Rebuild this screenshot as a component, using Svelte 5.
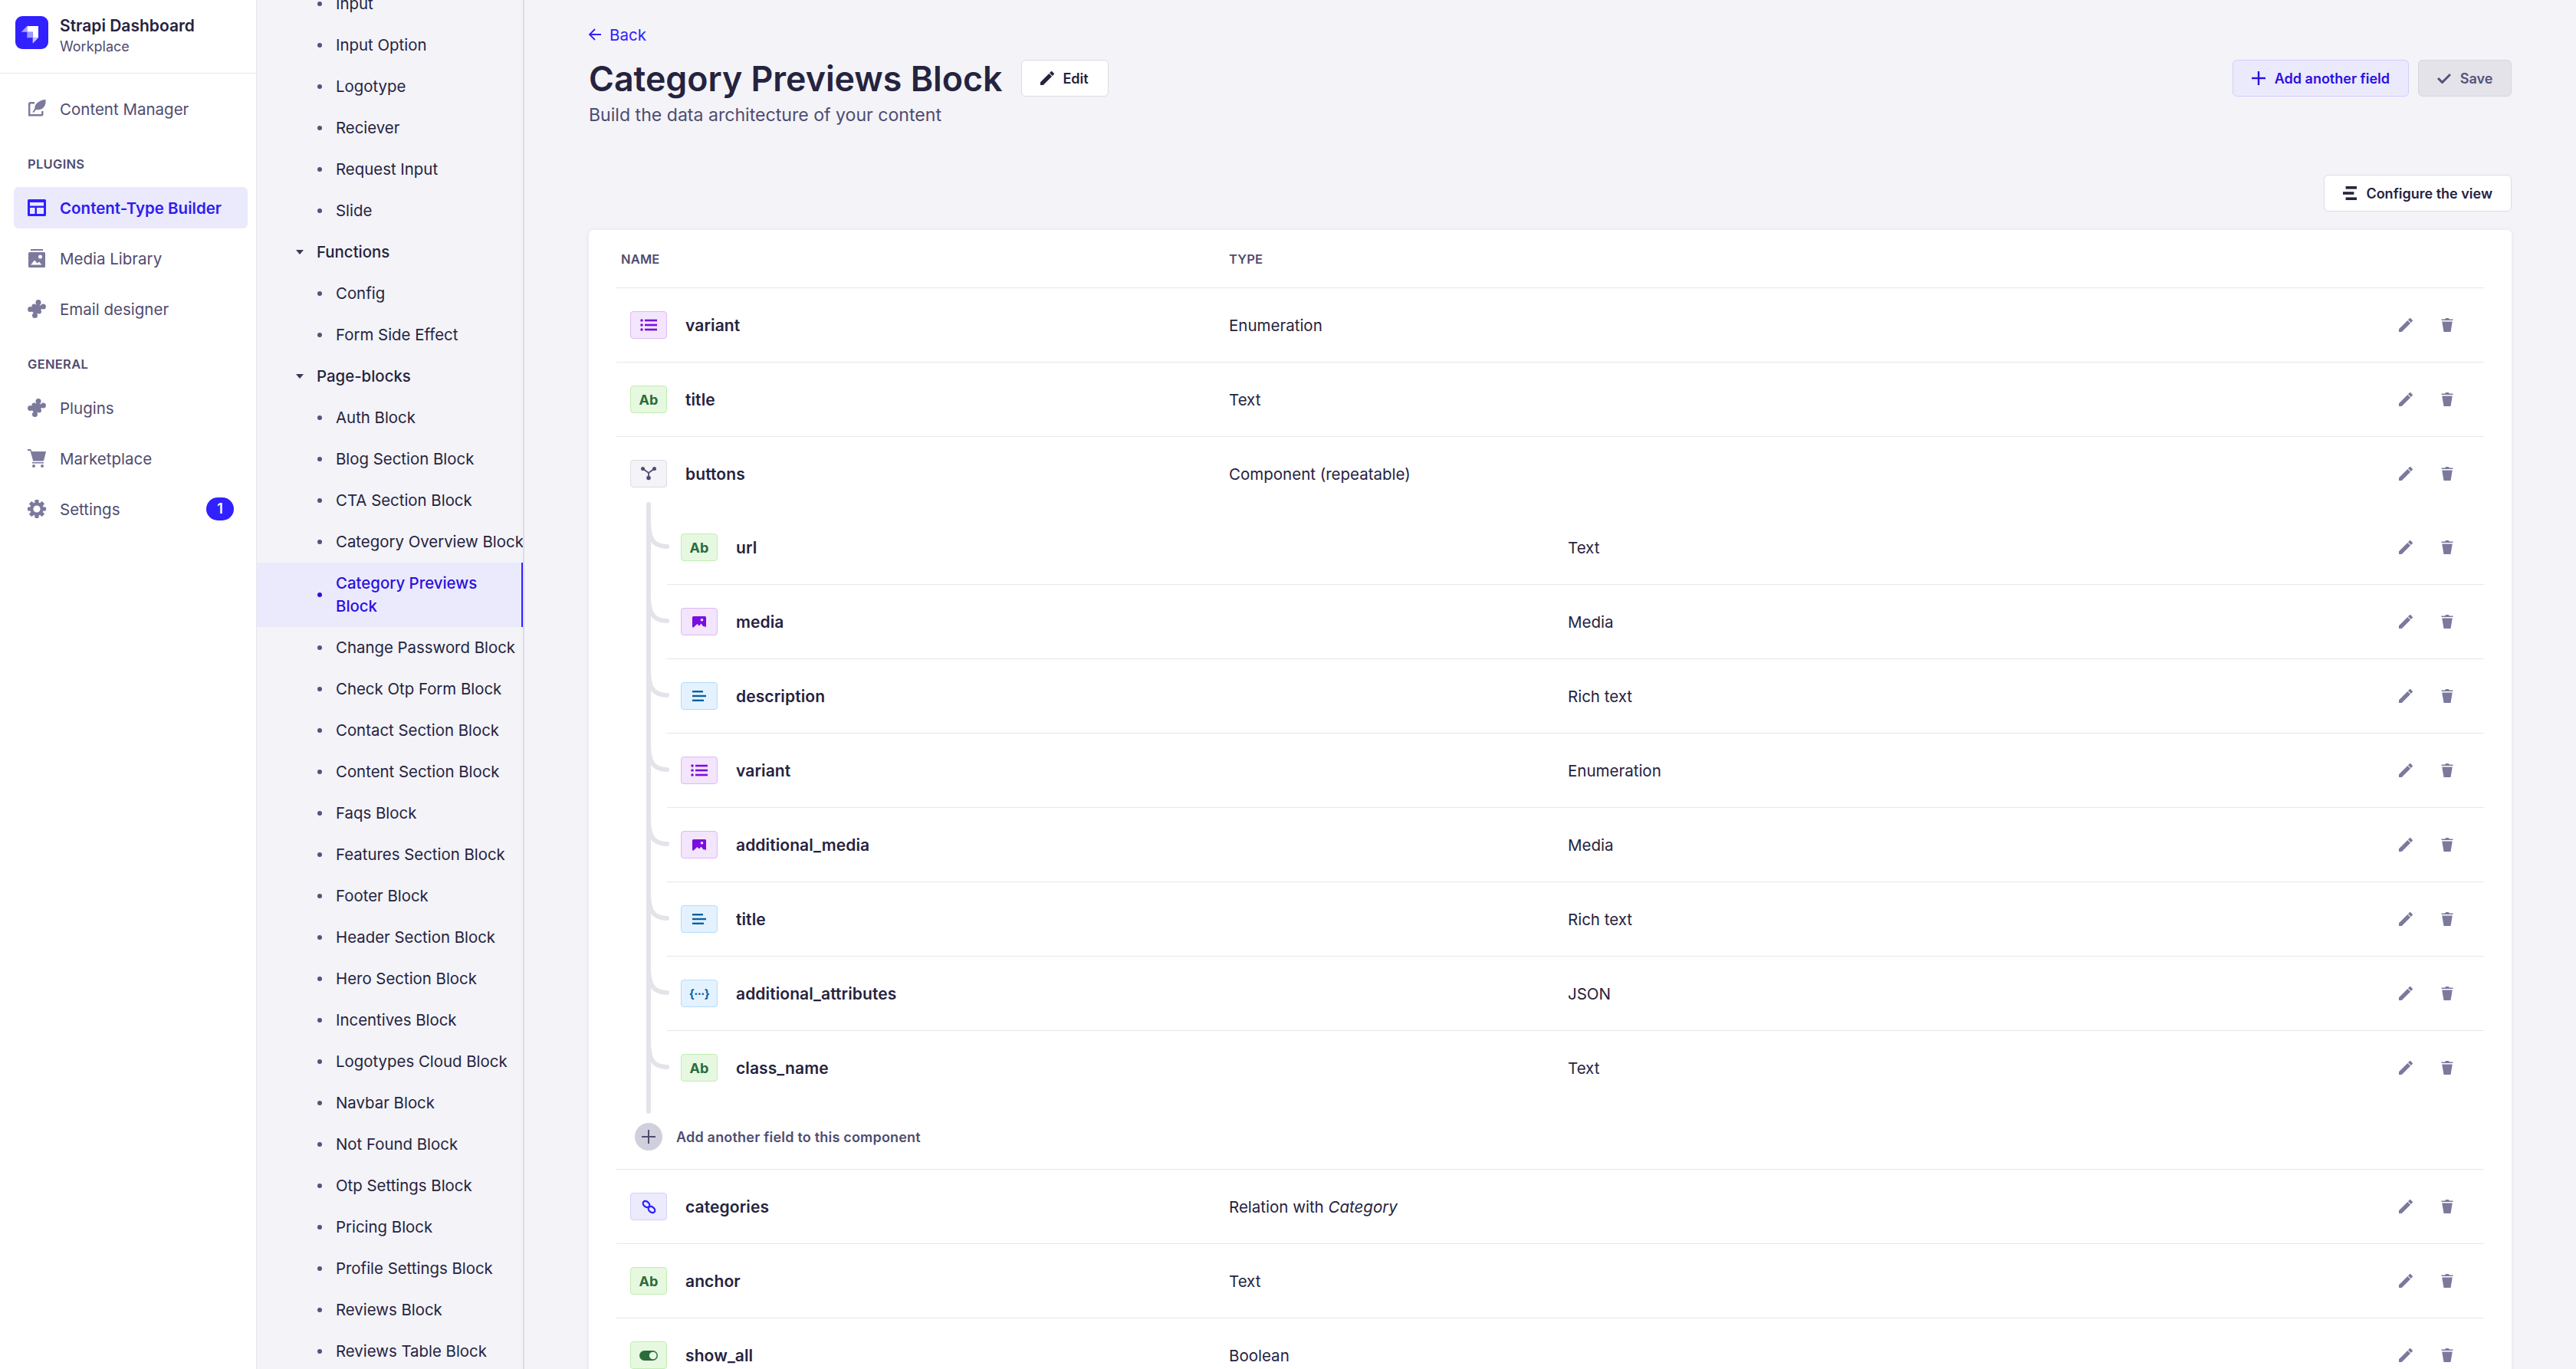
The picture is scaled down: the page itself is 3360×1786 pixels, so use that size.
<script>
  const plugins = [
    { label: 'Content-Type Builder', icon: 'layout', active: true },
    { label: 'Media Library', icon: 'media' },
    { label: 'Email designer', icon: 'puzzle' }
  ];
  const general = [
    { label: 'Plugins', icon: 'puzzle' },
    { label: 'Marketplace', icon: 'cart' },
    { label: 'Settings', icon: 'gear', badge: 1 }
  ];

  const tree = [
    { label: 'Input' }, { label: 'Input Option' }, { label: 'Logotype' }, { label: 'Reciever' },
    { label: 'Request Input' }, { label: 'Slide' },
    { label: 'Functions', group: true },
    { label: 'Config' }, { label: 'Form Side Effect' },
    { label: 'Page-blocks', group: true },
    { label: 'Auth Block' }, { label: 'Blog Section Block' }, { label: 'CTA Section Block' },
    { label: 'Category Overview Block' },
    { label: 'Category Previews Block', active: true },
    { label: 'Change Password Block' }, { label: 'Check Otp Form Block' }, { label: 'Contact Section Block' },
    { label: 'Content Section Block' }, { label: 'Faqs Block' }, { label: 'Features Section Block' },
    { label: 'Footer Block' }, { label: 'Header Section Block' }, { label: 'Hero Section Block' },
    { label: 'Incentives Block' }, { label: 'Logotypes Cloud Block' }, { label: 'Navbar Block' },
    { label: 'Not Found Block' }, { label: 'Otp Settings Block' }, { label: 'Pricing Block' },
    { label: 'Profile Settings Block' }, { label: 'Reviews Block' }, { label: 'Reviews Table Block' }
  ];

  const nested = [
    { name: 'url', kind: 'text', type: 'Text' },
    { name: 'media', kind: 'media', type: 'Media' },
    { name: 'description', kind: 'rich', type: 'Rich text' },
    { name: 'variant', kind: 'enum', type: 'Enumeration' },
    { name: 'additional_media', kind: 'media', type: 'Media' },
    { name: 'title', kind: 'rich', type: 'Rich text' },
    { name: 'additional_attributes', kind: 'json', type: 'JSON' },
    { name: 'class_name', kind: 'text', type: 'Text' }
  ];
  const after = [
    { name: 'anchor', kind: 'text', type: 'Text' },
    { name: 'show_all', kind: 'bool', type: 'Boolean' }
  ];
  const gearTeeth = [0, 45, 90, 135, 180, 225, 270, 315];
</script>

{#snippet navIcon(name)}
  <svg class="nav-icon" viewBox="0 0 24 24" fill="currentColor" aria-hidden="true">
    {#if name === 'feather'}
      <path d="M9 3H3.500A2.500 2.500 0 0 0 1 5.500v16h17a2.500 2.500 0 0 0 2.500-2.500v-4h-2.400v4H3.400V5.400H9z" />
      <path d="M23.500 0c.600 5-1 10.500-6 12.500-2.500 1-5 .800-6.500.500L8 17l-1.600-.800 3-4.700C8.500 6 15 .500 23.500 0z" />
    {:else if name === 'layout'}
      <path d="M0 2.500A1.500 1.500 0 0 1 1.500 1h21A1.500 1.500 0 0 1 24 2.500v19a1.500 1.500 0 0 1-1.500 1.500h-21A1.500 1.500 0 0 1 0 21.500zM3 5v4.500h18V5zm0 7v8h6.500v-8zm9 0v8h9v-8z" fill-rule="evenodd" />
    {:else if name === 'media'}
      <rect x="4" y="0" width="16" height="2" />
      <path d="M2.500 4h19A1.500 1.500 0 0 1 23 5.500v17a1.500 1.500 0 0 1-1.500 1.500h-19A1.500 1.500 0 0 1 1 22.500v-17A1.500 1.500 0 0 1 2.500 4zm14 3.500a2.500 2.500 0 1 0 0 5 2.500 2.500 0 0 0 0-5zM4 20.500l5-6 3.500 4 2.500-2 3.500 4z" fill-rule="evenodd" />
    {:else if name === 'puzzle'}
      <path d="M13.500 5 20 10 15 15.500 10 20 4 13 8 8.500z" />
      <circle cx="14" cy="3.600" r="3.500" />
      <circle cx="20.400" cy="9" r="3.500" />
      <circle cx="3.600" cy="12.500" r="3.500" />
      <circle cx="9.500" cy="20.400" r="3.500" />
      <circle cx="15" cy="15.500" r="3" />
      <circle cx="8.500" cy="8.500" r="3" />
    {:else if name === 'cart'}
      <path d="M0 0h3.200c.700 0 1.300.400 1.500 1.100L5.300 3H24l-2.700 11.300c-.200.700-.800 1.200-1.500 1.200H7.300L3.400 2H0z" />
      <rect x="6" y="17" width="15" height="1.500" />
      <circle cx="8" cy="22" r="2" />
      <circle cx="19" cy="22" r="2" />
    {:else if name === 'gear'}
      <g transform="translate(12 12)">
        {#each gearTeeth as a}
          <rect x="-2.600" y="-12" width="5.200" height="6" rx="1" transform="rotate({a})" />
        {/each}
      </g>
      <circle cx="12" cy="12" r="6.700" fill="none" stroke="currentColor" stroke-width="4.200" />
    {/if}
  </svg>
{/snippet}

{#snippet fieldIcon(kind)}
  <span class="badge {kind}">
    {#if kind === 'text'}
      Ab
    {:else if kind === 'enum'}
      <svg width="22" height="16" viewBox="0 0 22 16" fill="currentColor" aria-hidden="true">
        <circle cx="2" cy="2" r="1.800" /><circle cx="2" cy="8" r="1.800" /><circle cx="2" cy="14" r="1.800" />
        <rect x="6" y="0.700" width="16" height="2.600" /><rect x="6" y="6.700" width="16" height="2.600" /><rect x="6" y="12.700" width="16" height="2.600" />
      </svg>
    {:else if kind === 'media'}
      <svg width="18" height="15" viewBox="0 0 18 15" fill="currentColor" aria-hidden="true">
        <path d="M1.500 0h15A1.500 1.500 0 0 1 18 1.500V13l-1 1.500-1.300-1.800-1.200.8-3-4-2.500 3-2.500-2.500-3.300 3L1 15l-1-1.500v-12A1.500 1.500 0 0 1 1.500 0zm11 3a1.800 1.800 0 1 0 0 3.600 1.800 1.800 0 0 0 0-3.600z" fill-rule="evenodd" />
      </svg>
    {:else if kind === 'rich'}
      <svg width="18" height="14" viewBox="0 0 18 14" fill="currentColor" aria-hidden="true">
        <rect x="0" y="0" width="14" height="2.400" /><rect x="0" y="5.800" width="18" height="2.400" /><rect x="0" y="11.600" width="15" height="2.400" />
      </svg>
    {:else if kind === 'json'}
      <span class="json">{'{···}'}</span>
    {:else if kind === 'relation'}
      <svg width="19" height="19" viewBox="0 0 19 19" fill="none" stroke="currentColor" stroke-width="2.300" aria-hidden="true">
        <ellipse cx="6" cy="6" rx="4.800" ry="3.400" transform="rotate(40 6 6)" />
        <ellipse cx="13" cy="13" rx="4.800" ry="3.400" transform="rotate(40 13 13)" />
      </svg>
    {:else if kind === 'component'}
      <svg width="20" height="18" viewBox="0 0 20 18" fill="currentColor" aria-hidden="true">
        <path d="M2.500 2.500 10 8l7.500-5.500M10 8v7" fill="none" stroke="currentColor" stroke-width="1.800" />
        <circle cx="2.500" cy="2.500" r="2.500" /><circle cx="17.500" cy="2.500" r="2.500" /><circle cx="10" cy="14.500" r="2.800" />
      </svg>
    {:else if kind === 'bool'}
      <svg width="24" height="13" viewBox="0 0 24 13" aria-hidden="true">
        <rect width="24" height="13" rx="6.500" fill="currentColor" />
        <circle cx="17.700" cy="6.500" r="4.800" fill="#e6f9e0" />
      </svg>
    {/if}
  </span>
{/snippet}

{#snippet actions()}
  <span class="actions">
    <svg viewBox="0 0 24 24" fill="currentColor" aria-hidden="true"><path d="M23.604 3.514c.528.528.528 1.36 0 1.888l-2.622 2.623-5.032-5.033L18.574.37a1.322 1.322 0 011.888 0l3.142 3.143zM0 24v-5.035L15.017 3.948l5.034 5.034L5.034 24H0z" /></svg>
    <svg viewBox="0 0 24 24" fill="currentColor" aria-hidden="true"><path d="M3.236 6.149a.2.2 0 00-.197.233L6 24h12l2.960-17.618a.2.2 0 00-.196-.233H3.236zM21.800 1.983c.11 0 .2.09.2.2v1.584a.2.2 0 01-.2.2H2.200a.2.2 0 01-.2-.2V2.183c0-.11.09-.2.2-.2h5.511c.9 0 1.631-1.090 1.631-1.983h5.316c0 .894.73 1.983 1.631 1.983H21.800z" /></svg>
  </span>
{/snippet}

<div class="app">
  <aside class="sidebar">
    <div class="brand">
      <div class="logo">
        <svg width="43" height="43" viewBox="0 0 43 43" aria-hidden="true">
          <path d="M15.300 13H30v15.300h-7.300v-7.600h-7.400z" fill="#fff" />
          <path d="M7.700 20.700 15.300 13v7.700z" fill="#a8a4ff" />
          <path d="M15.300 20.700h7.400v7.600h-7.400z" fill="#9d97ff" />
          <path d="M22.700 28.300H30l-7.300 7.400z" fill="#c9c6ff" />
        </svg>
      </div>
      <div class="brand-text">
        <div class="brand-name">Strapi Dashboard</div>
        <div class="brand-sub">Workplace</div>
      </div>
    </div>
    <nav class="nav">
      <a class="nav-item">{@render navIcon('feather')}<span>Content Manager</span></a>
      <div class="nav-title first">Plugins</div>
      {#each plugins as item}
        <a class="nav-item" class:active={item.active}>{@render navIcon(item.icon)}<span>{item.label}</span></a>
      {/each}
      <div class="nav-title">General</div>
      {#each general as item}
        <a class="nav-item">
          {@render navIcon(item.icon)}<span>{item.label}</span>
          {#if item.badge}<b class="count">{item.badge}</b>{/if}
        </a>
      {/each}
    </nav>
  </aside>

  <aside class="subnav">
    <ul>
      {#each tree as row}
        {#if row.group}
          <li class="group"><i class="caret"></i>{row.label}</li>
        {:else}
          <li class="leaf" class:active={row.active}><i class="dot"></i><span>{row.label}</span></li>
        {/if}
      {/each}
    </ul>
  </aside>

  <main class="main">
    <a class="back">
      <svg width="20" height="20" viewBox="0 0 20 20" fill="none" stroke="currentColor" stroke-width="1.800" aria-hidden="true"><path d="M18 10H3M10 3l-7 7 7 7" /></svg>
      Back
    </a>
    <div class="title-row">
      <h1>Category Previews Block</h1>
      <button class="btn edit">
        <svg width="18" height="18" viewBox="0 0 24 24" fill="currentColor" aria-hidden="true"><path d="M23.604 3.514c.528.528.528 1.36 0 1.888l-2.622 2.623-5.032-5.033L18.574.37a1.322 1.322 0 011.888 0l3.142 3.143zM0 24v-5.035L15.017 3.948l5.034 5.034L5.034 24H0z" /></svg>
        Edit
      </button>
      <div class="title-actions">
        <button class="btn add">
          <svg width="18" height="18" viewBox="0 0 18 18" fill="currentColor" aria-hidden="true"><rect x="7.800" width="2.400" height="18" /><rect y="7.800" width="18" height="2.400" /></svg>
          Add another field
        </button>
        <button class="btn save">
          <svg width="18" height="14" viewBox="0 0 18 14" fill="none" stroke="currentColor" stroke-width="3" aria-hidden="true"><path d="M1 7l5.500 5.500L17 2" /></svg>
          Save
        </button>
      </div>
    </div>
    <p class="subtitle">Build the data architecture of your content</p>

    <div class="toolbar">
      <button class="btn">
        <svg width="18" height="18" viewBox="0 0 18 18" fill="currentColor" aria-hidden="true"><rect x="3.600" width="14.400" height="3.600" /><rect y="7.200" width="14.400" height="3.600" /><rect x="3.600" y="14.400" width="14.400" height="3.600" /></svg>
        Configure the view
      </button>
    </div>

    <section class="card">
      <div class="head"><span>Name</span><span>Type</span></div>

      <div class="row">
        <div class="name">{@render fieldIcon('enum')}<strong>variant</strong></div>
        <span class="type">Enumeration</span>{@render actions()}
      </div>
      <div class="row">
        <div class="name">{@render fieldIcon('text')}<strong>title</strong></div>
        <span class="type">Text</span>{@render actions()}
      </div>
      <div class="row parent">
        <div class="name">{@render fieldIcon('component')}<strong>buttons</strong></div>
        <span class="type">Component (repeatable)</span>{@render actions()}
      </div>

      <div class="nested">
        <i class="trunk"></i>
        {#each nested as f, i}
          <div class="row sub" class:last={i === nested.length - 1}>
            <svg class="branch" width="30" height="36" viewBox="0 0 30 36" fill="none" stroke="#e3e3ea" stroke-width="6" stroke-linecap="round" aria-hidden="true"><path d="M3 0c0 20 4 33 24 33" /></svg>
            <div class="name">{@render fieldIcon(f.kind)}<strong>{f.name}</strong></div>
            <span class="type">{f.type}</span>{@render actions()}
          </div>
        {/each}
        <div class="add-sub">
          <span class="add-circle"><svg width="18" height="18" viewBox="0 0 18 18" fill="currentColor" aria-hidden="true"><rect x="8" width="2" height="18" /><rect y="8" width="18" height="2" /></svg></span>
          Add another field to this component
        </div>
      </div>

      <div class="row">
        <div class="name">{@render fieldIcon('relation')}<strong>categories</strong></div>
        <span class="type">Relation with <em>Category</em></span>{@render actions()}
      </div>
      {#each after as f}
        <div class="row">
          <div class="name">{@render fieldIcon(f.kind)}<strong>{f.name}</strong></div>
          <span class="type">{f.type}</span>{@render actions()}
        </div>
      {/each}
    </section>
  </main>
</div>

<style>
  :global(body) {
    margin: 0;
    background: #f3f3f8;
    font-family: Inter, "Noto Sans", sans-serif;
    color: #25233f;
  }

  .app {
    display: flex;
    height: 100vh;
    overflow: hidden;
  }

  .sidebar {
    width: 335px;
    flex: none;
    background: #fff;
    border-right: 1px solid #e6e6ee;
    box-sizing: border-box;
  }

  .brand {
    display: flex;
    align-items: center;
    gap: 15px;
    height: 96px;
    padding: 0 20px;
    box-sizing: border-box;
    border-bottom: 1px solid #e6e6ee;
  }

  .logo {
    width: 43px;
    height: 43px;
    border-radius: 9px;
    background: #3120ff;
    margin-top: -11px;
  }

  .logo svg {
    display: block;
  }

  .brand-text {
    margin-top: -4px;
  }

  .brand-name {
    font-size: 21px;
    font-weight: 600;
    line-height: 30px;
  }

  .brand-sub {
    font-size: 18px;
    line-height: 24px;
    color: #4f4c70;
  }

  .nav {
    padding: 19px 11px 0 18px;
  }

  .nav-item {
    display: flex;
    align-items: center;
    gap: 18px;
    height: 54px;
    margin-bottom: 12px;
    padding: 0 18px;
    border-radius: 6px;
    font-size: 20.500px;
    color: #4f4c70;
  }

  .nav-item.active {
    background: #eaeafc;
    color: #2f1cf0;
    font-weight: 600;
  }

  .nav-icon {
    width: 24px;
    height: 24px;
    flex: none;
    color: #7b799c;
  }

  .active .nav-icon {
    color: #3120ff;
  }

  .nav-title {
    font-size: 16.500px;
    font-weight: 600;
    line-height: 24px;
    letter-spacing: 0.3px;
    text-transform: uppercase;
    color: #4f4c70;
    padding: 0 18px;
    margin: 33px 0 18px;
  }

  .count {
    margin-left: auto;
    width: 36px;
    height: 30px;
    border-radius: 15px;
    background: #3120ff;
    color: #fff;
    font-size: 18px;
    font-weight: 600;
    text-align: center;
    line-height: 30px;
  }

  .subnav {
    width: 349px;
    flex: none;
    box-sizing: border-box;
    border-right: 2px solid #dcdce4;
    overflow: hidden;
  }

  .subnav ul {
    list-style: none;
    margin: -22.500px 0 0;
    padding: 0;
  }

  .subnav li {
    display: flex;
    align-items: center;
    box-sizing: border-box;
    min-height: 54px;
    font-size: 20.400px;
    line-height: 30px;
  }

  .leaf {
    padding: 12px 0 12px 79px;
    white-space: nowrap;
  }

  .leaf .dot {
    width: 6px;
    height: 6px;
    border-radius: 50%;
    background: #55527a;
    flex: none;
    margin-right: 18px;
  }

  .leaf.active {
    background: #eaeafc;
    color: #2a0fe0;
    font-weight: 500;
    white-space: normal;
    padding-right: 50px;
    border-right: 3px solid #3120ff;
    margin-right: -1px;
  }

  .leaf.active .dot {
    background: #2a0fe0;
  }

  .group {
    padding-left: 51px;
    font-weight: 500;
  }

  .caret {
    width: 0;
    height: 0;
    border-left: 5.500px solid transparent;
    border-right: 5.500px solid transparent;
    border-top: 6px solid #3b3859;
    margin-right: 17px;
  }

  .main {
    flex: 1;
    min-width: 0;
    padding: 30px 84px 0;
  }

  .back {
    display: flex;
    align-items: center;
    gap: 9px;
    height: 30px;
    font-size: 20.500px;
    color: #3120ff;
    margin-bottom: 18px;
  }

  .back svg {
    margin-left: -2px;
  }

  .title-row {
    display: flex;
    align-items: center;
    gap: 24px;
    height: 48px;
  }

  h1 {
    margin: 0;
    font-size: 44.700px;
    font-weight: 600;
    line-height: 48px;
    color: #25233f;
    position: relative;
    top: 1px;
  }

  .title-actions {
    margin-left: auto;
    display: flex;
    gap: 12px;
  }

  .btn {
    display: inline-flex;
    align-items: center;
    gap: 12px;
    height: 48px;
    padding: 0 24px;
    box-sizing: border-box;
    border: 1px solid #dcdce4;
    border-radius: 6px;
    background: #fff;
    color: #25233f;
    font: 600 18px Inter, sans-serif;
  }

  .btn.edit {
    width: 114px;
    justify-content: center;
    padding: 0;
    gap: 11px;
  }

  .btn.add {
    background: #eaeafc;
    border-color: #d0cdfb;
    color: #2a0fe0;
  }

  .btn.save {
    background: #e3e3e9;
    border-color: #d6d6de;
    color: #55527a;
    width: 122px;
    padding: 0;
    justify-content: center;
  }

  .subtitle {
    margin: 6px 0 0;
    font-size: 23.100px;
    line-height: 36px;
    color: #4f4c70;
  }

  .toolbar {
    display: flex;
    justify-content: flex-end;
    margin: 60px 0 24px;
  }

  .card {
    background: #fff;
    border-radius: 6px;
    padding: 0 36px;
    box-shadow: 0 1px 6px rgba(33, 33, 52, 0.08);
  }

  .head {
    display: grid;
    grid-template-columns: 793px 1fr;
    height: 76px;
    padding: 0 0 0 6px;
    box-sizing: border-box;
    align-items: center;
    font-size: 16.500px;
    font-weight: 600;
    text-transform: uppercase;
    letter-spacing: 0.2px;
    color: #4f4c70;
    border-bottom: 1px solid #e6e6ee;
  }

  .row {
    display: grid;
    grid-template-columns: 781px 1fr auto;
    align-items: center;
    height: 97px;
    box-sizing: border-box;
    padding: 0 39px 0 18px;
    border-bottom: 1px solid #e6e6ee;
  }

  .row.parent {
    height: 96px;
    border-bottom: none;
  }

  .name {
    display: flex;
    align-items: center;
    gap: 24px;
  }

  .name strong {
    font-size: 21px;
    font-weight: 600;
    letter-spacing: 0.1px;
  }

  .type {
    font-size: 20.500px;
  }

  .badge {
    display: flex;
    align-items: center;
    justify-content: center;
    width: 48px;
    height: 36px;
    box-sizing: border-box;
    border: 1px solid;
    border-radius: 4px;
    flex: none;
    font-size: 18px;
    font-weight: 700;
  }

  .badge.text, .badge.bool {
    background: #e6f9e0;
    border-color: #c0eeb0;
    color: #2b6b3c;
  }

  .badge.enum, .badge.media {
    background: #f3e5fb;
    border-color: #dfb9f5;
    color: #7a0ee0;
  }

  .badge.rich, .badge.json {
    background: #e3f2fe;
    border-color: #b4dcfb;
    color: #0c5f9e;
  }

  .badge.relation {
    background: #ebebfc;
    border-color: #d3d0fb;
    color: #3120ff;
  }

  .badge.component {
    background: #f3f3f8;
    border-color: #dcdce4;
    color: #4f4c70;
  }

  .json {
    font-size: 15px;
    font-weight: 700;
    letter-spacing: -0.5px;
  }

  .actions {
    display: flex;
    gap: 36px;
    color: #7b799c;
  }

  .actions svg {
    width: 18px;
    height: 18px;
    display: block;
  }

  .nested {
    position: relative;
    padding-left: 66px;
    border-bottom: 1px solid #e6e6ee;
  }

  .trunk {
    position: absolute;
    left: 39px;
    top: -11px;
    bottom: 72px;
    width: 6px;
    border-radius: 3px;
    background: #e3e3ea;
  }

  .row.sub {
    position: relative;
    grid-template-columns: 1157px 1fr auto;
  }

  .row.sub.last {
    height: 96px;
    border-bottom: none;
  }

  .branch {
    position: absolute;
    left: -27px;
    top: 14px;
  }

  .add-sub {
    display: flex;
    align-items: center;
    gap: 18px;
    height: 84px;
    margin-left: -42px;
    font-size: 18px;
    font-weight: 600;
    letter-spacing: 0.2px;
    color: #4f4c70;
  }

  .add-circle {
    width: 36px;
    height: 36px;
    border-radius: 50%;
    background: #d0d0dd;
    color: #4f4c70;
    display: flex;
    align-items: center;
    justify-content: center;
  }
</style>
